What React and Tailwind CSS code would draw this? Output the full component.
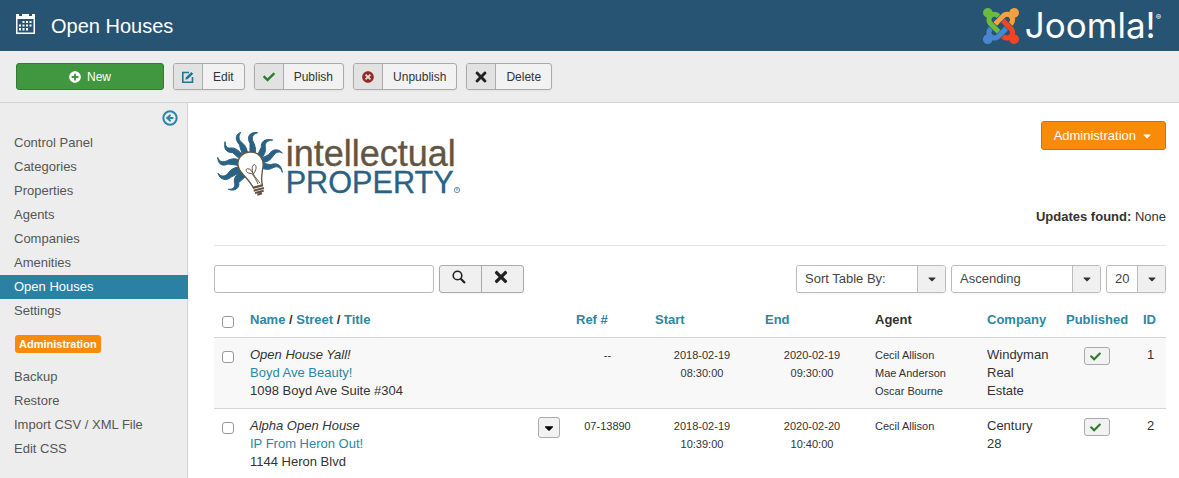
import { useState } from 'react';
import { CircleArrowLeft } from 'lucide-react';
import { FaCaretDown, FaCheck, FaPlusCircle, FaTimes, FaTimesCircle } from 'react-icons/fa';

const mainLinks = [
    'Control Panel',
    'Categories',
    'Properties',
    'Agents',
    'Companies',
    'Amenities',
    'Open Houses',
    'Settings',
];
const adminLinks = ['Backup', 'Restore', 'Import CSV / XML File', 'Edit CSS'];

const openHouses = [
    {
        id: 1,
        name: 'Open House Yall!',
        title: 'Boyd Ave Beauty!',
        street: '1098 Boyd Ave Suite #304',
        ref: '--',
        start: ['2018-02-19', '08:30:00'],
        end: ['2020-02-19', '09:30:00'],
        agents: ['Cecil Allison', 'Mae Anderson', 'Oscar Bourne'],
        company: 'Windyman Real Estate',
    },
    {
        id: 2,
        name: 'Alpha Open House',
        title: 'IP From Heron Out!',
        street: '1144 Heron Blvd',
        ref: '07-13890',
        start: ['2018-02-19', '10:39:00'],
        end: ['2020-02-20', '10:40:00'],
        agents: ['Cecil Allison'],
        company: 'Century 28',
        menu: true,
    },
];

function CalendarIcon() {
    return (
        <svg viewBox="0 0 19 21" className="mb-1 h-[21px] w-[19px]" fill="#fff" aria-hidden="true">
            <path d="M0 1h3v2h3V1h7v2h3V1h3v20H0zM1.500 6v13.500h16V6z" fillRule="evenodd" />
            <path d="M6.500 8h2v2h-2zM10 8h2v2h-2zM13.500 8h2v2h-2zM3 11.500h2v2H3zM6.500 11.500h2v2h-2zM10 11.500h2v2h-2zM13.500 11.500h2v2h-2zM3 15h2v2.500H3zM6.500 15h2v2.500h-2zM10 15h2v2.500h-2z" />
        </svg>
    );
}

function EditIcon() {
    return (
        <svg viewBox="0 0 12 12" className="size-3" fill="none" aria-hidden="true">
            <path d="M7 1.500H.8v9.700h9.700V6" stroke="currentColor" strokeWidth="1.600" />
            <path d="M3.300 8.800l.7-2.600L9.300.9l1.900 1.900-5.300 5.300z" fill="currentColor" />
        </svg>
    );
}

function SearchIcon() {
    return (
        <svg viewBox="0 0 14 14" className="size-3.5" fill="none" stroke="currentColor" aria-hidden="true">
            <circle cx="5.500" cy="5.500" r="4.300" strokeWidth="1.600" />
            <path d="M8.700 8.700l4.300 4.300" strokeWidth="2.200" />
        </svg>
    );
}

function JoomlaLogo() {
    return (
        <div className="flex items-center gap-1.5 text-white">
            <svg viewBox="0 32 448 448" className="size-9" aria-hidden="true">
                <path fill="#6dbb3c" d="M.6 92.1C.6 58.8 27.4 32 60.4 32c30 0 54.5 21.9 59.2 50.2 32.6-7.6 67.1.6 96.5 30l-44.3 44.3c-20.5-20.5-42.6-16.3-55.4-3.5-14.3 14.3-14.3 37.9 0 52.2l99.5 99.5-44 44.3c-87.7-87.2-49.7-49.7-99.8-99.7-26.8-26.5-35-64.8-24.8-98.9C20.4 144.6.6 120.7.6 92.1z" />
                <path fill="#f9a03c" d="M130.100 208.500l44.3 44.3c10-10 89.7-89.7 99.7-99.8 14.3-14.3 37.6-14.3 51.9 0 12.8 12.8 17 35-3.5 55.4l44 44.3c31.2-31.2 38.5-67.6 28.9-101.2 29.2-4.1 51.9-29.2 51.9-59.5 0-33.2-26.8-60.1-59.8-60.1-30.3 0-55.4 22.500-59.5 51.6-33.8-9.9-71.7-1.5-98.3 25.1-18.3 19.1-71.1 71.5-99.6 99.9z" />
                <path fill="#f44321" d="M396.400 360.700c8.2-32.7-.9-68.5-26.3-93.9-11.8-12.2 5 4.7-99.5-99.7l-44.3 44.3 99.7 99.7c14.3 14.3 14.3 37.6 0 51.9-12.8 12.8-35 17-55.4-3.5l-44 44.3c27.6 30.2 68 38.8 102.7 28 5.5 27.4 29.7 48.1 58.9 48.1 33 0 59.8-26.8 59.8-60.1 0-30.2-22.5-55-51.6-59.1z" />
                <path fill="#4a86cf" d="M312.100 307.600l-44-44.3c-87 86.4-50.4 50.4-99.7 99.8-14.3 14.3-37.6 14.3-51.9 0-13.1-13.4-16.9-35.3 3.2-55.4l-44-44.3c-30.2 30.2-38 65.2-29.5 98.3-26.7 6-46.2 29.9-46.2 58.2C0 453.2 26.8 480 59.800 480c28.6 0 52.5-19.8 58.6-46.7 32.7 8.2 68.5-.6 94.2-26 32.1-32 12.2-12.4 99.5-99.7z" />
            </svg>
            <span className="flex items-start pb-0.5 font-['Inter',sans-serif] text-[35px] leading-9 font-normal">
                Joomla!
                <sup className="top-0 pt-1 text-[8px] leading-3 font-normal">®</sup>
            </span>
        </div>
    );
}

function PropertyLogo() {
    return (
        <svg viewBox="0 0 750 216" className="h-[72px] w-[250px]" role="img" aria-label="intellectual PROPERTY">
            <g fill="#2a6284" stroke="#2a6284" strokeWidth="3" strokeLinejoin="round">
                <path d="M33 41C28 66 40 74 56 74L74 90L84 78C72 66 62 58 50 60C40 62 34 54 33 41Z" />
                <path d="M80 13C60 22 66 38 76 50L84 76L100 72C98 58 92 50 84 44C74 36 72 26 80 13Z" />
                <path d="M131 14C104 10 98 30 108 46L108 72L124 74C126 60 122 50 118 42C112 30 114 20 131 14Z" />
                <path d="M176 36C152 30 140 42 142 58L132 78L144 90C154 76 156 66 154 58C152 46 158 38 176 36Z" />
                <path d="M205 75C190 58 172 66 164 80L144 90L148 104C164 100 170 94 176 86C184 74 192 68 205 75Z" />
                <path d="M205 133C202 108 186 104 170 110L148 106L148 122C160 126 170 124 180 118C190 114 200 118 205 133Z" />
                <path d="M11 88C12 110 26 116 42 108L72 112L76 96C62 90 50 92 40 98C26 104 16 102 11 88Z" />
                <path d="M12 136C18 156 38 160 50 148L80 132L76 116C60 118 48 126 42 136C34 146 22 148 12 136Z" />
                <path d="M43 184C64 192 78 178 74 164L94 146L82 130C64 142 58 152 62 166C64 178 58 184 43 184Z" />
            </g>
            <g fill="none" stroke="#625542" strokeWidth="4">
                <path fill="#fff" d="M117 178C108 158 86 142 76 124C62 96 84 72 110 72C136 72 150 94 147 116C144 138 140 152 145 171Z" />
                <path d="M132 168C124 150 118 142 112 136C98 138 92 124 100 122C110 122 114 130 118 138C112 122 114 110 122 110C130 114 126 128 118 138C124 150 132 156 138 166" strokeWidth="3" />
                <path d="M117 180l30-8M119 188l31-8M123 195l26-7M130 200l14-4" strokeWidth="6" />
            </g>
            <text x="215" y="114" fontSize="108" fill="#625542" stroke="#625542">intellectual</text>
            <text x="215" y="194" fontSize="92" fill="#2a6284" stroke="#2a6284">PROPERTY</text>
            <circle cx="729" cy="186" r="8" fill="none" stroke="#2a6284" strokeWidth="2" />
            <text x="725" y="190" fontSize="11" fill="#2a6284">R</text>
        </svg>
    );
}

function ToolbarButton({ icon, children }) {
    return (
        <button className="flex h-[27px] items-stretch overflow-hidden rounded-[3px] border border-[#aaa] bg-[#f2f2f2] text-xs text-[#333] shadow-xs">
            <span className="flex w-[29px] items-center justify-center border-r border-[#aaa] bg-[#e2e2e2]">{icon}</span>
            <span className="flex items-center px-2.5">{children}</span>
        </button>
    );
}

function Picker({ label, options, className }) {
    return (
        <div className={`grid h-7 rounded-[3px] border border-[#bbb] shadow-xs ${className}`}>
            <select aria-label={label} className="col-start-1 row-start-1 min-w-0 appearance-none rounded-[3px] bg-white pr-8 pl-2 text-[13px] text-[#444]">
                {options.map((option) => (
                    <option key={option}>{option}</option>
                ))}
            </select>
            <span className="pointer-events-none col-start-1 row-start-1 flex w-7 items-center justify-center justify-self-end rounded-r-[2px] border-l border-[#bbb] bg-[#f0f0f0] text-[#333]">
                <FaCaretDown className="size-3" />
            </span>
        </div>
    );
}

function RowCheckbox({ label, ...props }) {
    return (
        <input
            type="checkbox"
            aria-label={label}
            className="mt-[5px] block size-3 appearance-none rounded-[3px] border border-[#999] bg-white checked:bg-[#2b82a5]"
            {...props}
        />
    );
}

function SideLink({ children, active }) {
    return (
        <li>
            <a
                href="#"
                className={active ? '-mr-px block bg-[#2b81a3] pl-3.5 leading-6 text-white' : 'block pl-3.5 leading-6 text-[#555]'}
            >
                {children}
            </a>
        </li>
    );
}

export default function App() {
    const [checked, setChecked] = useState([]);

    const toggle = (id) => {
        setChecked(checked.includes(id) ? checked.filter((c) => c !== id) : [...checked, id]);
    };
    const toggleAll = () => {
        setChecked(checked.length === openHouses.length ? [] : openHouses.map((h) => h.id));
    };

    return (
        <div className="flex min-h-screen flex-col bg-white font-['Liberation_Sans',Arial,sans-serif] text-[13px] leading-[18px] text-[#333]">
            <header className="flex h-[51px] items-center justify-between bg-[#275472] pr-[18px] pl-4">
                <div className="flex items-center gap-4">
                    <CalendarIcon />
                    <h1 className="text-xl text-white">Open Houses</h1>
                </div>
                <JoomlaLogo />
            </header>

            {/* Toolbar */}
            <div className="flex gap-[9px] border-b border-[#d3d3d3] bg-[#ededed] px-4 py-3">
                <button className="flex h-[27px] w-[148px] items-center justify-center gap-1.5 rounded-[3px] border border-[#2f7d2f] bg-[#409740] text-xs text-white">
                    <FaPlusCircle className="size-3" />
                    New
                </button>
                <ToolbarButton icon={<span className="text-[#24748f]"><EditIcon /></span>}>Edit</ToolbarButton>
                <ToolbarButton icon={<FaCheck className="size-3 text-[#2f7d2f]" />}>Publish</ToolbarButton>
                <ToolbarButton icon={<FaTimesCircle className="size-3 text-[#942a25]" />}>Unpublish</ToolbarButton>
                <ToolbarButton icon={<FaTimes className="size-4 text-[#222]" />}>Delete</ToolbarButton>
            </div>

            <div className="flex grow">
                <aside className="w-[188px] shrink-0 border-r border-[#d3d3d3] bg-[#ededed]">
                    <div className="flex justify-end pt-[7px] pr-[9px] pb-[5px]">
                        <button aria-label="Hide sidebar" className="text-[#2b87a3]">
                            <CircleArrowLeft className="size-4" strokeWidth={3} />
                        </button>
                    </div>
                    <ul>
                        {mainLinks.map((link) => (
                            <SideLink key={link} active={link === 'Open Houses'}>{link}</SideLink>
                        ))}
                    </ul>
                    <h2 className="my-3 ml-[15px] w-fit rounded-[3px] bg-[#f98b0b] px-1 text-[11px] font-bold text-white">
                        Administration
                    </h2>
                    <ul>
                        {adminLinks.map((link) => (
                            <SideLink key={link}>{link}</SideLink>
                        ))}
                    </ul>
                </aside>

                <main className="min-w-0 grow pt-[18px] pr-[13px] pl-[26px]">
                    <div className="flex items-start justify-between border-b border-[#e5e5e5] pb-[19px]">
                        <div className="pt-[7px]">
                            <PropertyLogo />
                        </div>
                        <div className="flex flex-col items-end gap-[58px]">
                            <button className="flex h-[29px] items-center gap-[5px] rounded-[3px] border border-[#c67605] bg-[#f98b0b] px-3 text-white">
                                Administration
                                <FaCaretDown className="size-3" />
                            </button>
                            <p>
                                <b>Updates found:</b> None
                            </p>
                        </div>
                    </div>

                    {/* Filters */}
                    <div className="mt-[19px] flex items-center justify-between">
                        <form className="flex gap-[5px]" onSubmit={(e) => e.preventDefault()}>
                            <input
                                type="text"
                                aria-label="Search"
                                className="h-7 w-[220px] rounded-[3px] border border-[#bbb] px-2"
                            />
                            <div className="flex h-7 rounded-[3px] border border-[#aaa] bg-[#f0f0f0] text-[#222] shadow-xs">
                                <button aria-label="Search" className="flex w-[42px] items-center justify-center border-r border-[#aaa] pr-1 pb-1">
                                    <SearchIcon />
                                </button>
                                <button type="reset" aria-label="Clear" className="flex w-[41px] items-center justify-center pr-1 pb-1">
                                    <FaTimes className="size-[18px]" />
                                </button>
                            </div>
                        </form>
                        <div className="flex gap-[5px]">
                            <Picker label="Sort table by" className="w-[150px]" options={['Sort Table By:', 'Name', 'Street', 'Start', 'End']} />
                            <Picker label="Direction" className="w-[150px]" options={['Ascending', 'Descending']} />
                            <Picker label="Rows" className="w-[60px]" options={['20', '50', '100']} />
                        </div>
                    </div>

                    <table className="mt-2.5 w-full table-fixed [&_td]:p-2 [&_td]:align-top [&_th]:p-2 [&_th]:align-top [&_th_a]:text-[#2b87a3]">
                        <thead>
                            <tr className="text-left">
                                <th className="w-7">
                                    <RowCheckbox label="Select all" checked={checked.length === openHouses.length} onChange={toggleAll} />
                                </th>
                                <th>
                                    <a href="#">Name</a> / <a href="#">Street</a> / <a href="#">Title</a>
                                </th>
                                <th className="w-[79px]"><a href="#">Ref #</a></th>
                                <th className="w-[110px]"><a href="#">Start</a></th>
                                <th className="w-[110px]"><a href="#">End</a></th>
                                <th className="w-28">Agent</th>
                                <th className="w-[79px]"><a href="#">Company</a></th>
                                <th className="w-[77px]"><a href="#">Published</a></th>
                                <th className="w-[31px]"><a href="#">ID</a></th>
                            </tr>
                        </thead>
                        <tbody>
                            {openHouses.map((house) => (
                                <tr key={house.id} className="border-t border-[#d5d5d5] odd:bg-[#f8f8f8]">
                                    <td>
                                        <RowCheckbox
                                            label={`Select ${house.name}`}
                                            checked={checked.includes(house.id)}
                                            onChange={() => toggle(house.id)}
                                        />
                                    </td>
                                    <td>
                                        <div className="flex items-start justify-between">
                                            <div>
                                                <i>{house.name}</i>
                                                <a href="#" className="block text-[#2b87a3]">{house.title}</a>
                                                {house.street}
                                            </div>
                                            {house.menu && (
                                                <button
                                                    aria-label="More actions"
                                                    className="flex h-[21px] w-[22px] items-center justify-center rounded-[3px] border border-[#aaa] bg-[#f2f2f2] text-black"
                                                >
                                                    <FaCaretDown className="size-3.5" />
                                                </button>
                                            )}
                                        </div>
                                    </td>
                                    <td className="text-center text-[11px]">{house.ref}</td>
                                    <td className="text-center text-[11px]">
                                        {house.start.map((line) => <div key={line}>{line}</div>)}
                                    </td>
                                    <td className="text-center text-[11px]">
                                        {house.end.map((line) => <div key={line}>{line}</div>)}
                                    </td>
                                    <td className="text-[11px]">
                                        {house.agents.map((agent) => <div key={agent}>{agent}</div>)}
                                    </td>
                                    <td><div className="w-min">{house.company}</div></td>
                                    <td>
                                        <button
                                            aria-label="Published"
                                            className="mx-auto mt-px flex h-[18px] w-[26px] items-center justify-center rounded-[3px] border border-[#aaa] bg-[#f2f2f2] pr-0.5 text-[#2f7d2f]"
                                        >
                                            <FaCheck className="size-[11px]" />
                                        </button>
                                    </td>
                                    <td className="text-center">{house.id}</td>
                                </tr>
                            ))}
                        </tbody>
                    </table>
                </main>
            </div>
        </div>
    );
}
